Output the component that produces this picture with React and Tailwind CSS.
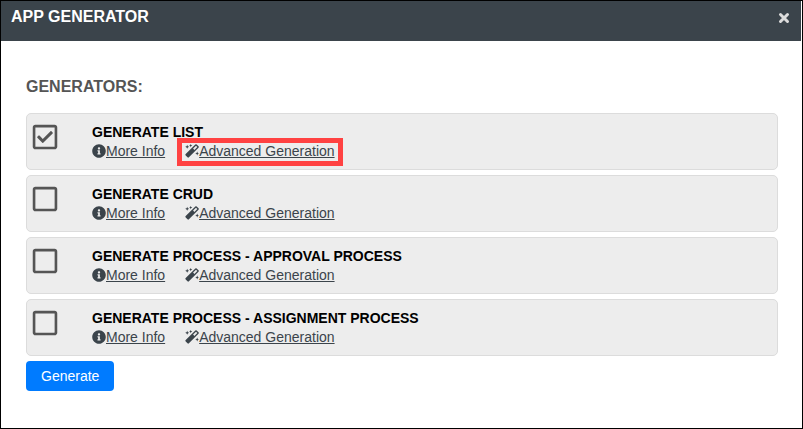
import { useState } from 'react';
import { FaInfoCircle, FaRegCheckSquare, FaRegSquare } from 'react-icons/fa';

const generators = [
  { id: 'list', title: 'GENERATE LIST', highlighted: true },
  { id: 'crud', title: 'GENERATE CRUD' },
  { id: 'approval', title: 'GENERATE PROCESS - APPROVAL PROCESS' },
  { id: 'assignment', title: 'GENERATE PROCESS - ASSIGNMENT PROCESS' },
];

// Solid wand with a cut line below the tip and a few sparks
function WandIcon() {
  return (
    <svg viewBox="0 0 14 14" className="size-[14px] shrink-0" fill="currentColor" aria-hidden="true">
      <path
        fillRule="evenodd"
        d="M10.3 .5a1 1 0 0 1 1.4 0l1.8 1.8a1 1 0 0 1 0 1.4L3.9 13.3a1 1 0 0 1-1.4 0L.7 11.5a1 1 0 0 1 0-1.4zM11 1.7 8.1 4.6l1.3 1.3 2.9-2.9z"
      />
      <path d="M2.2 .8 2.8 2.2 4.2 2.8 2.8 3.4 2.2 4.8 1.6 3.4 .2 2.8 1.6 2.2zM5.7 0 6.2 1.1 7.3 1.6 6.2 2.1 5.7 3.2 5.2 2.1 4.1 1.6 5.2 1.1zM12.2 7.5 12.8 8.9 14 9.5 12.8 10.1 12.2 11.5 11.6 10.1 10.2 9.5 11.6 8.9z" />
    </svg>
  );
}

function CloseIcon() {
  return (
    <svg viewBox="0 0 12 12" className="size-3" stroke="currentColor" strokeWidth="3" strokeLinecap="round" aria-hidden="true">
      <path d="M2.5 2.5l7 7M9.5 2.5l-7 7" />
    </svg>
  );
}

function GeneratorRow({ generator, checked, onToggle }) {
  const Box = checked ? FaRegCheckSquare : FaRegSquare;

  return (
    <li className="flex rounded-[5px] border border-[#dcdcdc] bg-[#ededed] pt-[9px] pb-2 pl-1">
      <div className="relative h-7 w-[61px] shrink-0">
        <input
          id={generator.id}
          type="checkbox"
          checked={checked}
          onChange={onToggle}
          className="block size-7 cursor-pointer appearance-none"
        />
        <Box size={28} className="pointer-events-none absolute top-0 left-0 text-[#555]" />
      </div>
      <div>
        <label htmlFor={generator.id} className="block text-sm leading-[18px] font-bold text-black">
          {generator.title}
        </label>
        <div className="flex gap-5 text-sm leading-5 text-[#3b444b]">
          <a href="#info" className="flex items-center">
            <FaInfoCircle size={14} />
            <span className="underline">More Info</span>
          </a>
          <a href="#advanced" className="relative flex items-center">
            <WandIcon />
            <span className="underline">Advanced Generation</span>
            {generator.highlighted && (
              <span className="pointer-events-none absolute -inset-x-2 -top-[3px] -bottom-[5px] border-5 border-[#ff4242]" />
            )}
          </a>
        </div>
      </div>
    </li>
  );
}

export default function App() {
  const [selected, setSelected] = useState(['list']);

  const toggle = (id) => {
    setSelected(selected.includes(id) ? selected.filter(s => s !== id) : [...selected, id]);
  };

  return (
    <div className="min-h-screen border border-black bg-white font-['Liberation_Sans',Arial,sans-serif]">
      <header className="mr-px flex h-10 items-start justify-between bg-[#3b444b] pt-1 pr-[11px] pl-[10px]">
        <h1 className="text-base leading-6 font-bold text-white">APP GENERATOR</h1>
        <button type="button" aria-label="Close" className="flex h-6 items-center pt-[2px] text-[#dcdcdc]">
          <CloseIcon />
        </button>
      </header>

      <main className="px-6 pt-[34px] pb-6 pl-[25px]">
        <h2 className="text-base leading-6 font-bold text-[#555]">GENERATORS:</h2>

        <ul className="mt-[14px] flex flex-col gap-[5px]">
          {generators.map(g => (
            <GeneratorRow
              key={g.id}
              generator={g}
              checked={selected.includes(g.id)}
              onToggle={() => toggle(g.id)}
            />
          ))}
        </ul>

        <button type="button" className="mt-[5px] h-[30px] rounded-[4px] bg-[#007bff] px-[15px] text-sm text-white">
          Generate
        </button>
      </main>
    </div>
  );
}
